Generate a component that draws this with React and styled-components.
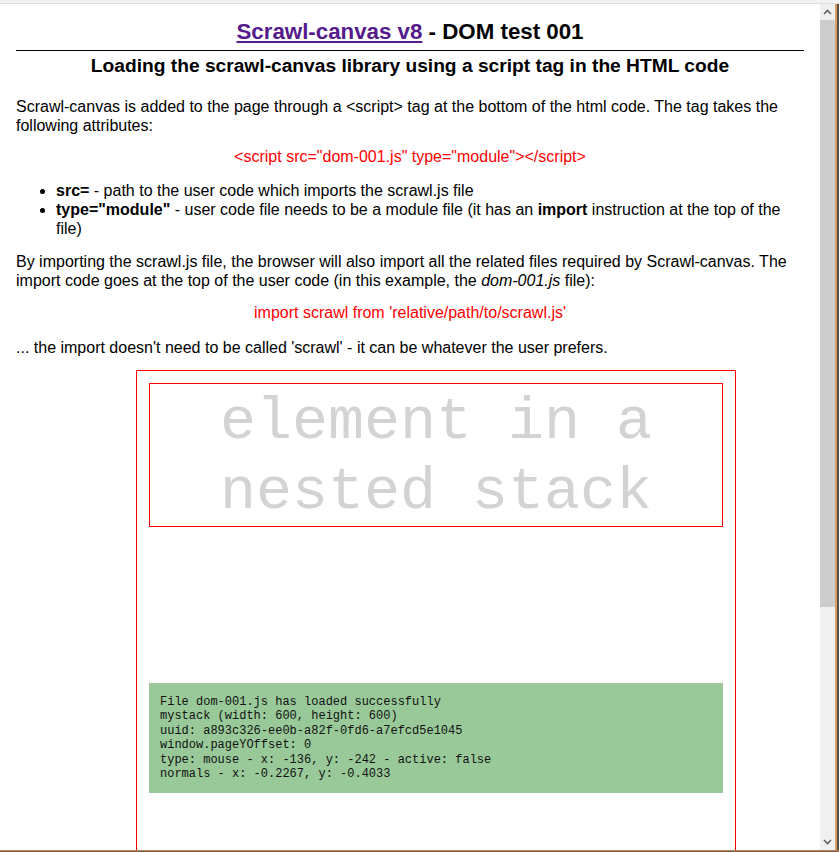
import React from 'react';
import styled, { createGlobalStyle } from 'styled-components';

const GlobalStyle = createGlobalStyle`
  html, body {
    margin: 0;
    padding: 0;
  }
  body {
    font-family: "Liberation Sans", Arial, sans-serif;
    background: #5d4b39;
  }
`;

const statusLines = [
  'File dom-001.js has loaded successfully',
  'mystack (width: 600, height: 600)',
  'uuid: a893c326-ee0b-a82f-0fd6-a7efcd5e1045',
  'window.pageYOffset: 0',
  'type: mouse - x: -136, y: -242 - active: false',
  'normals - x: -0.2267, y: -0.4033',
];

const Chevron = ({ down }) => (
  <svg width="9" height="6" viewBox="0 0 9 6">
    <polyline
      points={down ? '1,1 4.5,4.5 8,1' : '1,5 4.5,1.5 8,5'}
      fill="none"
      stroke="#606060"
      strokeWidth="1.6"
    />
  </svg>
);

export default function App() {
  return (
    <>
      <GlobalStyle />
      <Frame>
        <TopStrip />
        <Middle>
          <Viewport>
            <Page>
              <Title>
                <TitleLink href="#">Scrawl-canvas v8</TitleLink> - DOM test 001
              </Title>
              <Subtitle>Loading the scrawl-canvas library using a script tag in the HTML code</Subtitle>

              <Text>
                Scrawl-canvas is added to the page through a &lt;script&gt; tag at the bottom of the html code. The tag takes the following attributes:
              </Text>
              <Text $code $space="12px 0 15px">&lt;script src="dom-001.js" type="module"&gt;&lt;/script&gt;</Text>

              <List>
                <li><b>src=</b> - path to the user code which imports the scrawl.js file</li>
                <li><b>type="module"</b> - user code file needs to be a module file (it has an <b>import</b> instruction at the top of the file)</li>
              </List>

              <Text>
                By importing the scrawl.js file, the browser will also import all the related files required by Scrawl-canvas. The import code goes at the top of the user code (in this example, the <i>dom-001.js</i> file):
              </Text>
              <Text $code $space="13px 0 16px">import scrawl from 'relative/path/to/scrawl.js'</Text>

              <Text>... the import doesn't need to be called 'scrawl' - it can be whatever the user prefers.</Text>

              <Stack>
                <StackElement>element in a<br />nested stack</StackElement>
                <Status>
                  {statusLines.map((line) => (
                    <div key={line}>{line}</div>
                  ))}
                </Status>
              </Stack>
            </Page>
          </Viewport>
          <Scrollbar>
            <ScrollButton><Chevron /></ScrollButton>
            <Thumb />
            <Track />
            <ScrollButton><Chevron down /></ScrollButton>
          </Scrollbar>
          <EdgeV />
          <DesktopV />
        </Middle>
        <EdgeH />
        <DesktopH />
      </Frame>
    </>
  );
}

const Frame = styled.div`
  width: 839px;
  height: 852px;
  display: flex;
  flex-direction: column;
  overflow: hidden;
  background: #5d4b39;
`;

const TopStrip = styled.div`
  height: 3px;
  background: #f2f2f2;
  border-bottom: 1px solid #dedede;
`;

const Middle = styled.div`
  display: flex;
  height: 846px;
`;

const Viewport = styled.div`
  width: 820px;
  flex-shrink: 0;
  overflow: hidden;
  background: #fff;
`;

const Page = styled.div`
  padding: 0 16px;
  color: #000;
  display: flow-root;
`;

const Title = styled.h1`
  margin: 15px 0 0;
  padding-bottom: 5px;
  border-bottom: 1px solid #000;
  font-size: 22.3px;
  line-height: 26px;
  font-weight: bold;
  text-align: center;
`;

const TitleLink = styled.a`
  color: #551a8b;
  text-decoration: underline;
`;

const Subtitle = styled.h2`
  margin: 4px 0 20px;
  font-size: 19.2px;
  line-height: 22px;
  font-weight: bold;
  text-align: center;
`;

const Text = styled.p`
  margin: ${(p) => p.$space || '12px 0'};
  font-size: 16px;
  line-height: 19px;
  color: ${(p) => (p.$code ? '#ff0000' : '#000')};
  text-align: ${(p) => (p.$code ? 'center' : 'left')};
`;

const List = styled.ul`
  margin: 15px 0 14px;
  padding-left: 40px;
  font-size: 16px;
  line-height: 19px;
`;

const Stack = styled.div`
  box-sizing: border-box;
  width: 600px;
  height: 600px;
  margin: 13px 0 0 120px;
  padding: 12px;
  border: 1px solid #ff0000;
`;

const StackElement = styled.div`
  box-sizing: border-box;
  height: 144px;
  padding-top: 3px;
  border: 1px solid #ff0000;
  font-family: "Liberation Mono", "Courier New", monospace;
  font-size: 60px;
  line-height: 70px;
  color: #d3d3d3;
  text-align: center;
`;

const Status = styled.div`
  box-sizing: border-box;
  height: 110px;
  margin-top: 156px;
  padding: 12px 11px;
  background: #99c999;
  font-family: "Liberation Mono", "Courier New", monospace;
  font-size: 12px;
  line-height: 14.4px;
  color: #111;
  white-space: pre;
`;

const Scrollbar = styled.div`
  width: 15px;
  flex-shrink: 0;
  display: flex;
  flex-direction: column;
  background: #f0f0f0;
`;

const ScrollButton = styled.div`
  height: 16px;
  display: flex;
  align-items: center;
  justify-content: center;
`;

const Thumb = styled.div`
  height: 587px;
  background: #cdcdcd;
`;

const Track = styled.div`
  flex: 1;
`;

const EdgeV = styled.div`
  width: 2px;
  flex-shrink: 0;
  background: #d89f6b;
`;

const DesktopV = styled.div`
  width: 2px;
  flex-shrink: 0;
  background: #5d4b39;
`;

const EdgeH = styled.div`
  height: 1px;
  background: #b8835a;
`;

const DesktopH = styled.div`
  height: 1px;
  background: #7a6048;
`;
